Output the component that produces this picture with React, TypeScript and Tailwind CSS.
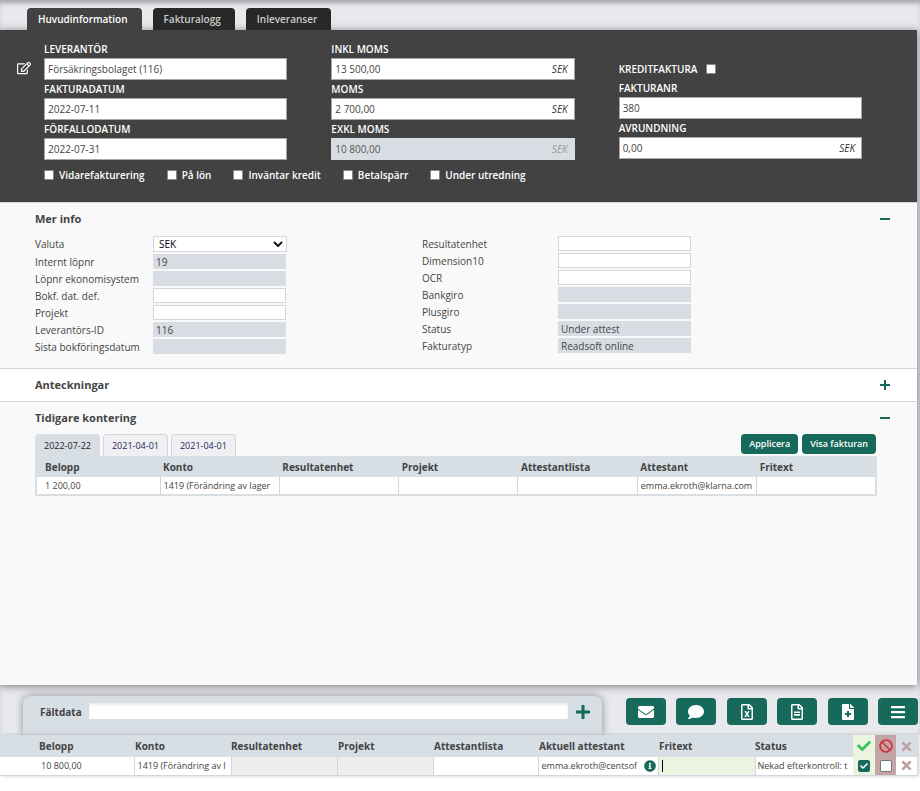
import React from "react";
import clsx from "clsx";
import {
  FaBan,
  FaBars,
  FaCheck,
  FaComment,
  FaEnvelope,
  FaFileMedical,
  FaInfoCircle,
  FaRegEdit,
  FaRegFileAlt,
  FaRegFileExcel,
} from "react-icons/fa";

interface IHeadField {
  id: string;
  label: string;
  value: string;
  currency?: boolean;
  disabled?: boolean;
}

interface IInfoField {
  id: string;
  label: string;
  value?: string;
  disabled?: boolean;
  options?: string[];
}

const supplierFields: IHeadField[] = [
  { id: "supplier", label: "LEVERANTÖR", value: "Försäkringsbolaget (116)" },
  { id: "invoice-date", label: "FAKTURADATUM", value: "2022-07-11" },
  { id: "due-date", label: "FÖRFALLODATUM", value: "2022-07-31" },
];

const amountFields: IHeadField[] = [
  { id: "incl-vat", label: "INKL MOMS", value: "13 500,00", currency: true },
  { id: "vat", label: "MOMS", value: "2 700,00", currency: true },
  { id: "excl-vat", label: "EXKL MOMS", value: "10 800,00", currency: true, disabled: true },
];

const numberFields: IHeadField[] = [
  { id: "invoice-no", label: "FAKTURANR", value: "380" },
  { id: "rounding", label: "AVRUNDNING", value: "0,00", currency: true },
];

const flags = ["Vidarefakturering", "På lön", "Inväntar kredit", "Betalspärr", "Under utredning"];

const infoLeft: IInfoField[] = [
  { id: "currency", label: "Valuta", options: ["SEK", "EUR", "USD"] },
  { id: "serial", label: "Internt löpnr", value: "19", disabled: true },
  { id: "erp-serial", label: "Löpnr ekonomisystem", disabled: true },
  { id: "def-date", label: "Bokf. dat. def." },
  { id: "project", label: "Projekt" },
  { id: "supplier-id", label: "Leverantörs-ID", value: "116", disabled: true },
  { id: "last-date", label: "Sista bokföringsdatum", disabled: true },
];

const infoRight: IInfoField[] = [
  { id: "unit", label: "Resultatenhet" },
  { id: "dimension", label: "Dimension10" },
  { id: "ocr", label: "OCR" },
  { id: "bankgiro", label: "Bankgiro", disabled: true },
  { id: "plusgiro", label: "Plusgiro", disabled: true },
  { id: "status", label: "Status", value: "Under attest", disabled: true },
  { id: "type", label: "Fakturatyp", value: "Readsoft online", disabled: true },
];

const historyColumns = ["Belopp", "Konto", "Resultatenhet", "Projekt", "Attestantlista", "Attestant", "Fritext"];
const historyRow = ["1 200,00", "1419 (Förändring av lager", "", "", "", "emma.ekroth@klarna.com", ""];

const actions = [
  { label: "E-post", icon: FaEnvelope },
  { label: "Kommentar", icon: FaComment },
  { label: "Exportera till Excel", icon: FaRegFileExcel },
  { label: "Visa dokument", icon: FaRegFileAlt },
  { label: "Lägg till fil", icon: FaFileMedical },
  { label: "Meny", icon: FaBars },
];

const CrossIcon = () => (
  <svg viewBox="0 0 12 12" className="mx-auto size-[11px] text-[#bfa3a4]">
    <path d="M1.5 1.5l9 9M10.5 1.5l-9 9" stroke="currentColor" strokeWidth="3" />
  </svg>
);

const HeadField = ({ field }: { field: IHeadField }) => (
  <div>
    <label htmlFor={field.id} className="block h-[18px] text-[10px] leading-[18px] font-semibold text-white">
      {field.label}
    </label>
    <div
      className={clsx(
        "flex h-[22px] items-center border px-[3px] text-[10px]",
        field.disabled ? "border-[#d8dde4] bg-[#d8dde4] text-[#555]" : "border-[#a6a6a6] bg-white text-[#444]"
      )}
    >
      <input id={field.id} defaultValue={field.value} disabled={field.disabled} className="w-full min-w-0 outline-none" />
      {field.currency && (
        <span className={clsx("pr-[3px] italic", field.disabled ? "text-[#999]" : "text-[#333]")}>SEK</span>
      )}
    </div>
  </div>
);

const HeadCheckbox = ({ id, className }: { id: string; className?: string }) => (
  <input
    id={id}
    type="checkbox"
    className={clsx("size-[10px] shrink-0 appearance-none rounded-[1px] border border-[#8a8a8a] bg-white", className)}
  />
);

const InfoRow = ({ field, labelClass }: { field: IInfoField; labelClass: string }) => (
  <div className={clsx("flex items-start", field.options ? "h-[18px]" : "h-[17px]")}>
    <label htmlFor={field.id} className={clsx("shrink-0 text-[10px] leading-4 whitespace-nowrap text-[#444]", labelClass)}>
      {field.label}
    </label>
    {field.options ? (
      <div className="relative w-[134px]">
        <select
          id={field.id}
          className="block h-4 w-full appearance-none border border-[#d3d6de] bg-white pl-[5px] text-[10px] leading-3 text-black outline-none"
        >
          {field.options.map((option) => (
            <option key={option}>{option}</option>
          ))}
        </select>
        <svg viewBox="0 0 10 6" className="pointer-events-none absolute top-[5px] right-[4px] h-[6px] w-[10px]">
          <path d="M1 1l4 4 4-4" fill="none" stroke="#111" strokeWidth="2" />
        </svg>
      </div>
    ) : (
      <input
        id={field.id}
        defaultValue={field.value}
        disabled={field.disabled}
        className={clsx(
          "h-[15px] w-[133px] border px-[2px] text-[10px] leading-3 text-[#444] outline-none",
          field.disabled ? "border-[#d8dde4] bg-[#d8dde4]" : "border-[#d3d6de] bg-white"
        )}
      />
    )}
  </div>
);

const SectionTitle = ({ title, open }: { title: string; open: boolean }) => (
  <div className="flex h-8 items-center justify-between">
    <h2 className="text-[11px] font-bold text-[#444]">{title}</h2>
    <button aria-label={title} aria-expanded={open} className="-mr-[14px] flex size-[12px] cursor-pointer items-center justify-center">
      <svg viewBox="0 0 10 10" className="size-[10px] text-[#17695b]">
        <path d={open ? "M0 5h10" : "M0 5h10M5 0v10"} stroke="currentColor" strokeWidth="2" />
      </svg>
    </button>
  </div>
);

const InvoiceHead = () => (
  <section className="bg-[#424242] pt-[10px] pr-[55px] pb-[17px]">
    <div className="flex">
      <div className="w-11 shrink-0 pt-[21px] pl-[17px]">
        <button aria-label="Redigera leverantör" className="block cursor-pointer text-white">
          <FaRegEdit className="size-[14px]" />
        </button>
      </div>
      <div className="grid flex-1 grid-cols-3 gap-x-11">
        <div>
          {supplierFields.map((field) => (
            <HeadField key={field.id} field={field} />
          ))}
        </div>
        <div>
          {amountFields.map((field) => (
            <HeadField key={field.id} field={field} />
          ))}
        </div>
        <div>
          <div className="flex h-[39px] items-end pb-px">
            <label htmlFor="credit" className="text-[10px] leading-[18px] font-semibold text-white">
              KREDITFAKTURA
            </label>
            <HeadCheckbox id="credit" className="mb-1 ml-[9px]" />
          </div>
          {numberFields.map((field) => (
            <HeadField key={field.id} field={field} />
          ))}
        </div>
      </div>
    </div>
    <div className="flex h-[25px] items-end gap-[22px] pl-11">
      {flags.map((flag) => (
        <div key={flag} className="flex h-5 items-center">
          <HeadCheckbox id={flag} />
          <label htmlFor={flag} className="pl-[5px] text-[10px] font-semibold whitespace-nowrap text-white">
            {flag}
          </label>
        </div>
      ))}
    </div>
  </section>
);

const MoreInfo = () => (
  <section className="border-y border-[#d3d6de] bg-[#f9f9f9] pr-10 pb-3 pl-[35px]">
    <SectionTitle title="Mer info" open />
    <div className="grid grid-cols-[387fr_455fr] pt-px">
      <div>
        {infoLeft.map((field) => (
          <InfoRow key={field.id} field={field} labelClass="w-[118px]" />
        ))}
      </div>
      <div>
        {infoRight.map((field) => (
          <InfoRow key={field.id} field={field} labelClass="w-[136px]" />
        ))}
      </div>
    </div>
  </section>
);

const History = () => (
  <section className="min-h-[283px] bg-[#f9f9f9] pr-10 pl-[35px]">
    <SectionTitle title="Tidigare kontering" open />
    <div className="flex items-start justify-between">
      <div className="flex gap-[3px]">
        {["2022-07-22", "2021-04-01", "2021-04-01"].map((date, i) => (
          <button
            key={i}
            className={clsx(
              "h-[22px] cursor-pointer rounded-t border border-b-0 px-2 text-[9px]",
              i === 0 ? "border-[#d7dee4] bg-[#d7dee4] text-[#222]" : "border-[#d3d6de] bg-[#f0f0f2] text-[#23265c]"
            )}
          >
            {date}
          </button>
        ))}
      </div>
      <div className="flex gap-1 pr-px">
        <button className="h-5 cursor-pointer rounded bg-[#17695b] px-2 text-[9px] font-semibold text-white">
          Applicera
        </button>
        <button className="h-5 cursor-pointer rounded bg-[#17695b] px-2 text-[9px] font-semibold text-white">
          Visa fakturan
        </button>
      </div>
    </div>
    <table className="w-full table-fixed border-collapse border-2 border-[#d7dee4] text-left text-[#444]">
      <thead>
        <tr className="h-5 bg-[#d7dee4] text-[10px]">
          {historyColumns.map((column, i) => (
            <th key={column} className={clsx("p-0 font-bold", i === 0 ? "w-[124px] pl-2" : "pl-[3px]")}>
              {column}
            </th>
          ))}
        </tr>
      </thead>
      <tbody>
        <tr className="h-[18px] bg-white text-[9px]">
          {historyRow.map((cell, i) => (
            <td
              key={i}
              className={clsx(
                "overflow-hidden border-[#d3d6de] p-0 whitespace-nowrap",
                i === 0 ? "pl-2" : "border-l pl-[3px]"
              )}
            >
              {cell}
            </td>
          ))}
        </tr>
      </tbody>
    </table>
  </section>
);

const FooterBar = () => (
  <div className="flex h-[50px] items-end pr-[2px] pl-[23px]">
    <div className="flex h-[39px] flex-1 items-start rounded-t-lg bg-[#d7dee4] pt-[7px] pl-[17px] shadow-[0_0_8px_rgba(0,0,0,0.4)]">
      <label htmlFor="field-data" className="w-12 text-[10px] leading-[18px] font-bold text-[#444]">
        Fältdata
      </label>
      <input
        id="field-data"
        className="ml-px h-4 min-w-0 flex-1 bg-white text-[10px] shadow-[inset_0_2px_3px_rgba(0,0,0,0.08)] outline-none"
      />
      <button aria-label="Lägg till rad" className="mr-[12px] ml-2 cursor-pointer pt-[2px] text-[#17695b]">
        <svg viewBox="0 0 14 14" className="size-[14px]">
          <path d="M0 7h14M7 0v14" stroke="currentColor" strokeWidth="3" />
        </svg>
      </button>
    </div>
    <div className="ml-6 flex w-[292px] justify-between self-start pt-[13px]">
      {actions.map(({ label, icon: Icon }) => (
        <button
          key={label}
          aria-label={label}
          className="flex h-[27px] w-10 cursor-pointer items-center justify-center rounded bg-[#17695b] text-white"
        >
          <Icon className="size-4" />
        </button>
      ))}
    </div>
  </div>
);

const PostingTable = () => (
  <table className="w-full table-fixed border-collapse border-b border-[#d3d6de] bg-white text-left text-[#444]">
    <colgroup>
      <col className="w-[134px]" />
      <col className="w-[97px]" />
      <col className="w-[106px]" />
      <col className="w-[96px]" />
      <col className="w-[105px]" />
      <col className="w-[120px]" />
      <col />
      <col className="w-[98px]" />
      <col className="w-[22px]" />
      <col className="w-[21px]" />
      <col className="w-[21px]" />
    </colgroup>
    <thead>
      <tr className="h-[22px] bg-[#d7dee4] text-[10px] whitespace-nowrap [&>th]:p-0 [&>th]:font-bold">
        <th><span className="pl-[39px]">Belopp</span></th>
        <th><span className="pl-px">Konto</span></th>
        <th>Resultatenhet</th>
        <th><span className="pl-px">Projekt</span></th>
        <th><span className="pl-px">Attestantlista</span></th>
        <th><span className="pl-px">Aktuell attestant</span></th>
        <th><span className="pl-px">Fritext</span></th>
        <th>Status</th>
        <th className="bg-[#ebf4e0]"><FaCheck aria-label="Godkänn" className="mx-auto size-[14px] text-[#3cc45c]" /></th>
        <th className="bg-[#c2a5a6]"><FaBan aria-label="Neka" className="mx-auto size-[14px] text-[#cf3340]" /></th>
        <th aria-label="Ta bort"><CrossIcon /></th>
      </tr>
    </thead>
    <tbody>
      <tr className="h-[18px] text-[9px] whitespace-nowrap [&>td]:overflow-hidden [&>td]:border-[#d3d6de] [&>td]:p-0">
        <td><span className="pl-[41px]">10 800,00</span></td>
        <td className="border-l"><span className="pl-[3px]">1419 (Förändring av l</span></td>
        <td className="border-l bg-[#eee]"></td>
        <td className="border-l bg-[#eee]"></td>
        <td className="border-l"></td>
        <td className="border-l">
          <div className="flex items-center">
            <span className="w-[105px] pl-[3px]">emma.ekroth@centsof</span>
            <FaInfoCircle className="size-3 shrink-0 text-[#17695b]" />
          </div>
        </td>
        <td className="border-l bg-[#ebf4e0]">
          <div className="flex h-[17px] items-center pl-[3px]">
            <span className="h-3 w-px bg-black" />
            <input aria-label="Fritext" className="min-w-0 flex-1 outline-none" />
          </div>
        </td>
        <td className="border-l"><span className="pl-[2px]">Nekad efterkontroll: t</span></td>
        <td className="bg-[#ebf4e0]">
          <div className="relative mx-auto size-3">
            <input
              type="checkbox"
              defaultChecked
              aria-label="Godkänn rad"
              className="block size-3 appearance-none rounded-[2px] border border-[#17695b] bg-white checked:bg-[#17695b]"
            />
            <FaCheck className="pointer-events-none absolute top-[2px] left-[2px] size-2 text-white" />
          </div>
        </td>
        <td className="bg-[#c2a5a6]">
          <input
            type="checkbox"
            aria-label="Neka rad"
            className="mx-auto block size-3 appearance-none rounded-[2px] border border-[#777] bg-white"
          />
        </td>
        <td>
          <button aria-label="Ta bort rad" className="mx-auto block cursor-pointer">
            <CrossIcon />
          </button>
        </td>
      </tr>
    </tbody>
  </table>
);

const App = () => {
  const tabs = [
    { label: "Huvudinformation", isSelected: true },
    { label: "Fakturalogg", isSelected: false },
    { label: "Inleveranser", isSelected: false },
  ];

  return (
    <div className="min-h-screen bg-white font-['Open_Sans',sans-serif]">
      <div className="bg-[#e8e9ed] shadow-[inset_0_5px_5px_-2px_rgba(0,0,0,0.3)]">
        <nav className="flex gap-[11px] pt-2 pl-[27px]">
          {tabs.map((tab) => (
            <button
              key={tab.label}
              className={clsx(
                "h-[22px] cursor-pointer rounded-t pr-[14px] pl-[11px] text-[10px] font-semibold",
                tab.isSelected ? "bg-[#424242] text-white" : "bg-[#282828] text-[#ccc]"
              )}
            >
              {tab.label}
            </button>
          ))}
        </nav>
        <main className="mr-[3px] shadow-[0_1px_8px_rgba(0,0,0,0.5)]">
          <InvoiceHead />
          <MoreInfo />
          <section className="border-b border-[#d3d6de] bg-white pr-10 pl-[35px]">
            <SectionTitle title="Anteckningar" open={false} />
          </section>
          <History />
        </main>
        <FooterBar />
      </div>
      <div className="relative mr-[3px] shadow-[2px_0_4px_rgba(0,0,0,0.2)]">
        <PostingTable />
      </div>
    </div>
  );
};

export default App;
